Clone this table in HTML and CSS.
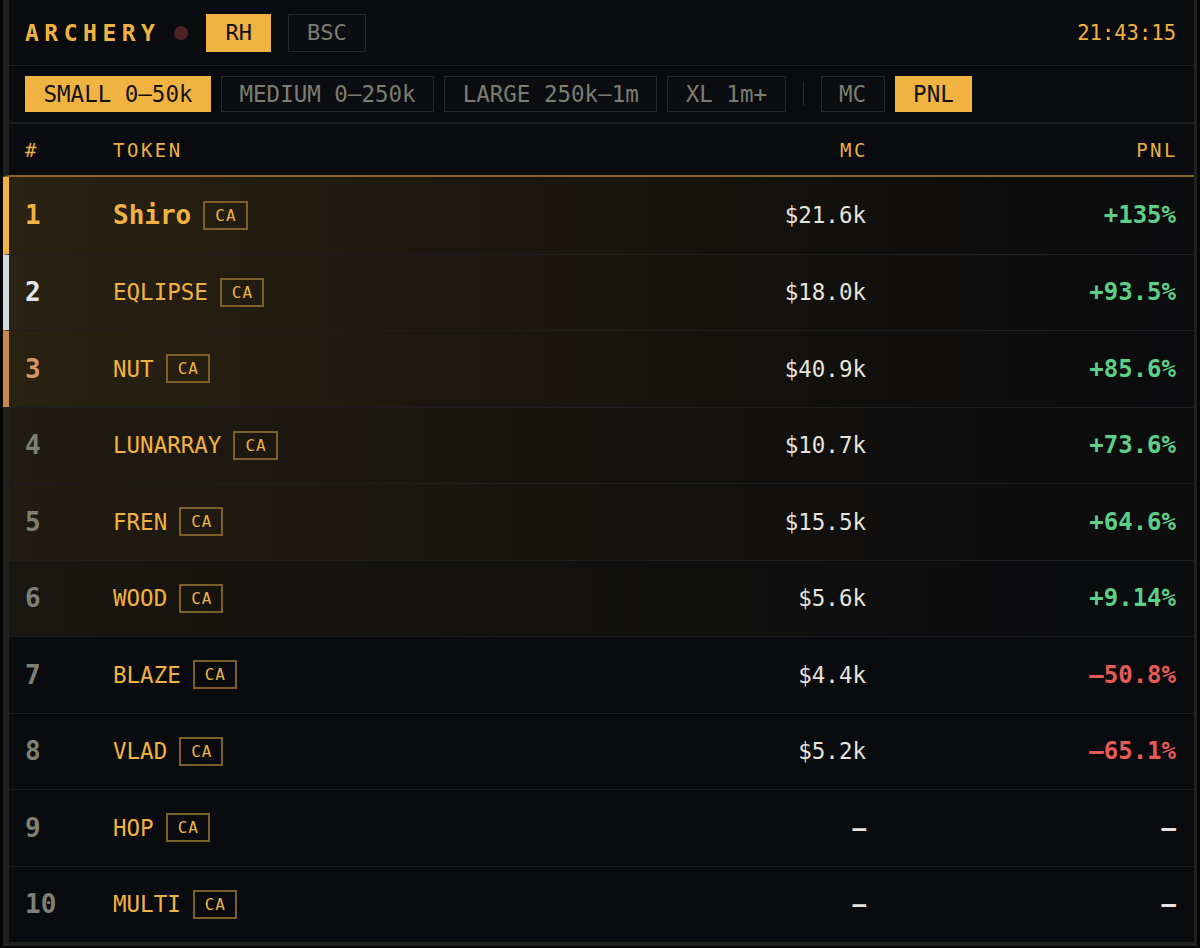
FILE: index.html
```html
<!DOCTYPE html>
<html lang="en">
<head>
  <meta charset="UTF-8">
  <meta name="viewport" content="width=device-width, initial-scale=1.0">
  <title>Archery</title>
  <link rel="stylesheet" href="styles.css">
</head>
<body>
  <div class="app">
    <!-- topo: marca, rede e hora -->
    <header class="topbar">
      <div class="brand">ARCHERY</div>
      <span class="status-dot"></span>
      <button class="chip active">RH</button>
      <button class="chip">BSC</button>
      <div class="clock">21:43:15</div>
    </header>

    <!-- filtros -->
    <div class="filters">
      <button class="chip active">SMALL 0–50k</button>
      <button class="chip">MEDIUM 0–250k</button>
      <button class="chip">LARGE 250k–1m</button>
      <button class="chip">XL 1m+</button>
      <span class="divider"></span>
      <button class="chip">MC</button>
      <button class="chip active">PNL</button>
    </div>

    <div class="table">
      <div class="thead">
        <div>#</div>
        <div>TOKEN</div>
        <div class="num">MC</div>
        <div class="num">PNL</div>
      </div>

      <div class="row gold hot">
        <div class="rank">1</div>
        <div class="token"><span class="name big">Shiro</span><span class="ca">CA</span></div>
        <div class="mc">$21.6k</div>
        <div class="pnl up">+135%</div>
      </div>
      <div class="row silver hot">
        <div class="rank">2</div>
        <div class="token"><span class="name">EQLIPSE</span><span class="ca">CA</span></div>
        <div class="mc">$18.0k</div>
        <div class="pnl up">+93.5%</div>
      </div>
      <div class="row bronze hot">
        <div class="rank">3</div>
        <div class="token"><span class="name">NUT</span><span class="ca">CA</span></div>
        <div class="mc">$40.9k</div>
        <div class="pnl up">+85.6%</div>
      </div>
      <div class="row warm">
        <div class="rank">4</div>
        <div class="token"><span class="name">LUNARRAY</span><span class="ca">CA</span></div>
        <div class="mc">$10.7k</div>
        <div class="pnl up">+73.6%</div>
      </div>
      <div class="row warm">
        <div class="rank">5</div>
        <div class="token"><span class="name">FREN</span><span class="ca">CA</span></div>
        <div class="mc">$15.5k</div>
        <div class="pnl up">+64.6%</div>
      </div>
      <div class="row mild">
        <div class="rank">6</div>
        <div class="token"><span class="name">WOOD</span><span class="ca">CA</span></div>
        <div class="mc">$5.6k</div>
        <div class="pnl up">+9.14%</div>
      </div>
      <div class="row">
        <div class="rank">7</div>
        <div class="token"><span class="name">BLAZE</span><span class="ca">CA</span></div>
        <div class="mc">$4.4k</div>
        <div class="pnl down">–50.8%</div>
      </div>
      <div class="row">
        <div class="rank">8</div>
        <div class="token"><span class="name">VLAD</span><span class="ca">CA</span></div>
        <div class="mc">$5.2k</div>
        <div class="pnl down">–65.1%</div>
      </div>
      <div class="row">
        <div class="rank">9</div>
        <div class="token"><span class="name">HOP</span><span class="ca">CA</span></div>
        <div class="mc empty">–</div>
        <div class="pnl">–</div>
      </div>
      <div class="row">
        <div class="rank">10</div>
        <div class="token"><span class="name">MULTI</span><span class="ca">CA</span></div>
        <div class="mc empty">–</div>
        <div class="pnl">–</div>
      </div>
    </div>
  </div>
</body>
</html>
```

FILE: styles.css
```css
* {
  box-sizing: border-box;
  margin: 0;
  padding: 0;
}

body {
  font-family: "DejaVu Sans Mono", "Liberation Mono", monospace;
  background-color: #060607;
  color: #e6e4dc;
  padding: 0 3px 3px 3px;
}

.app {
  background-color: #0a0b0e;
  border-right: 3px solid #1f211c;
  border-bottom: 4px solid #1f211c;
}

/* cada faixa tem a borda esquerda própria, para o destaque do ranking */
.topbar,
.filters,
.thead,
.row {
  border-left: 6px solid #1f211c;
}

.topbar {
  display: flex;
  align-items: center;
  height: 66px;
  padding: 0 18px 0 16px;
  border-bottom: 1px solid #1e1f22;
}

.brand {
  font-size: 23px;
  font-weight: bold;
  letter-spacing: 5.5px;
  color: #f0b341;
}

.status-dot {
  width: 14px;
  height: 14px;
  border-radius: 50%;
  background-color: #4a221f;
  margin: 0 18px 0 14px;
}

.chip {
  font-family: inherit;
  height: 38px;
  padding: 0 18px;
  font-size: 22px;
  color: #7b7d72;
  background-color: #0c0d10;
  border: 1px solid #26272a;
  cursor: pointer;
}

.chip.active {
  background-color: #f0b341;
  border-color: #f0b341;
  color: #111;
}

.topbar .chip + .chip {
  margin-left: 17px;
}

.clock {
  margin-left: auto;
  font-size: 20.5px;
  color: #f0b341;
}

.filters {
  display: flex;
  align-items: center;
  gap: 10px;
  height: 58px;
  padding-left: 16px;
  border-bottom: 2px solid #1c1d20;
}

.filters .chip {
  height: 36px;
  font-size: 22.5px;
  padding: 0 17.5px;
}

.divider {
  width: 1px;
  height: 24px;
  background-color: #2a2b2e;
  margin: 0 7px;
}

.thead,
.row {
  display: grid;
  grid-template-columns: 88px 1fr 200px 310px;
  align-items: center;
  padding: 0 18px 0 16px;
}

.thead {
  height: 53px;
  font-size: 19px;
  letter-spacing: 2.5px;
  color: #e8b042;
  border-bottom: 2px solid #8a6526;
}

.num {
  text-align: right;
  margin-right: -2px;
}

.row {
  height: 76.5px;
  border-top: 1px solid #1d1e21;
}

.thead + .row {
  border-top: none;
}

.row.hot {
  background: linear-gradient(90deg, #2a2212 0%, #1c170f 40%, #0f0e0d 80%, #0b0c0e 100%);
}

.row.warm {
  background: linear-gradient(90deg, #211b11 0%, #17140f 45%, #0d0d0e 85%);
}

.row.mild {
  background: linear-gradient(90deg, #1a1611 0%, #12110f 50%, #0b0c0e 90%);
}

.row.gold {
  border-left-color: #f0b341;
}

.row.silver {
  border-left-color: #d2d6e0;
}

.row.bronze {
  border-left-color: #c8884e;
}

.rank {
  font-size: 26px;
  font-weight: bold;
  color: #7b8274;
}

.gold .rank {
  color: #f0b341;
}

.silver .rank {
  color: #e2e5ec;
}

.bronze .rank {
  color: #d89660;
}

.token {
  display: flex;
  align-items: center;
  gap: 12px;
}

.name {
  font-size: 22.5px;
  color: #f0b341;
}

.name.big {
  font-size: 26px;
  font-weight: bold;
}

.ca {
  font-size: 16px;
  letter-spacing: 1px;
  color: #eab443;
  border: 2px solid #7d6028;
  padding: 3px 9px 3px 10px;
}

.mc {
  text-align: right;
  font-size: 22.5px;
  color: #e6e4dc;
}

.mc.empty {
  font-weight: bold;
}

.pnl {
  text-align: right;
  font-size: 24px;
  font-weight: bold;
  color: #e6e4dc;
}

.pnl.up {
  color: #5ecf88;
}

.pnl.down {
  color: #e65a57;
}
```
